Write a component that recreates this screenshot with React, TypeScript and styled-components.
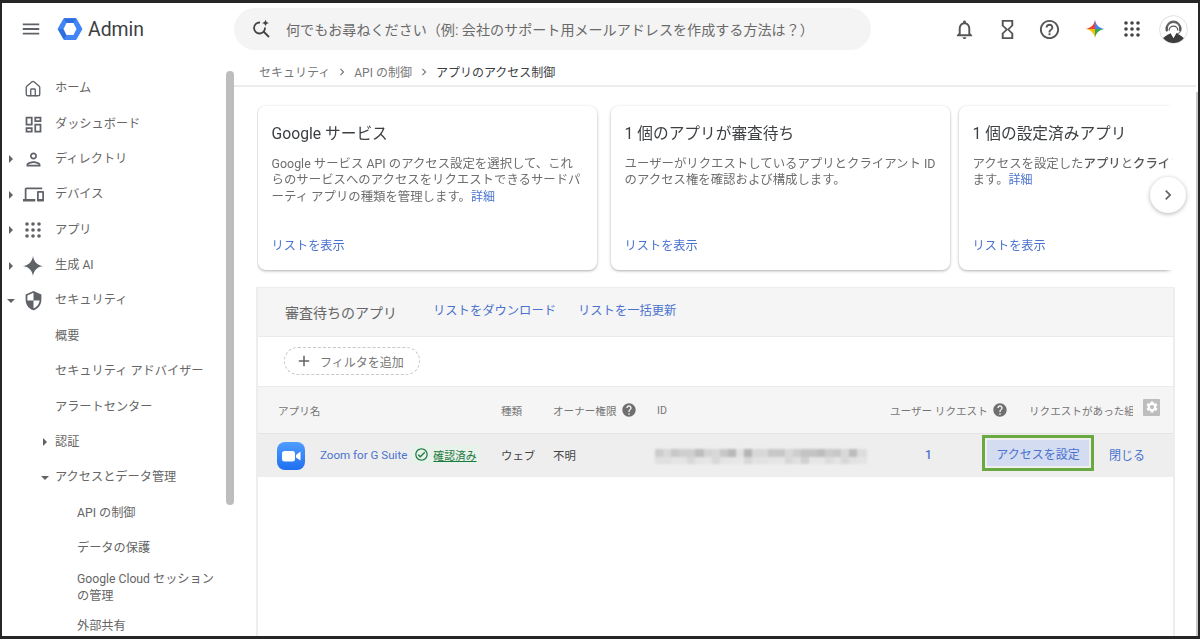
import React from "react";
import styled, { createGlobalStyle } from "styled-components";
import { House } from "lucide-react";
import {
  MdMenu,
  MdOutlineDashboard,
  MdOutlinePerson,
  MdOutlineDevices,
  MdSecurity,
  MdOutlineNotifications,
  MdOutlineHourglassEmpty,
  MdHelpOutline,
  MdHelp,
  MdChevronRight,
  MdAdd,
  MdOutlineCheckCircle,
  MdSettings,
} from "react-icons/md";

const GlobalStyle = createGlobalStyle`
  html, body {
    margin: 0;
    padding: 0;
    background: #fff;
  }
  * {
    box-sizing: border-box;
  }
`;

const BLUE = "#4a72cf";
const FONT = `"Roboto", "Noto Sans CJK JP", sans-serif`;

// hard-edged strip of grey blocks, used for the masked client id
const blockStrip = (shades: string[], size: number) =>
  `linear-gradient(90deg, ${shades
    .map((c, i) => `#${c} ${i * size}px ${(i + 1) * size}px`)
    .join(", ")})`;

const ID_TOP = "ccc d8d8d8 c8c8c8 cfcfcf cfcfcf bdbdbd d4d4d4 d8d8d8 c8c8c8 b8b8b8 e0e0e0 b4b4b4 d8d8d8 d8d8d8 c8c8c8 c8c8c8 d8d8d8 cdcdcd c4c4c4 c4c4c4 bdbdbd ccc c8c8c8 d8d8d8 bcbcbc dcdcdc".split(" ");
const ID_BOTTOM = "e0e0e0 e0e0e0 e4e4e4 e4e4e4 d8d8d8 e4e4e4 e6e6e6 d8d8d8 e4e4e4 e6e6e6 e8e8e8 d8d8d8 e2e2e2 e2e2e2 e4e4e4 e6e6e6 d8d8d8 e0e0e0 d0d0d0 e6e6e6 e6e6e6 dcdcdc e4e4e4 d8d8d8 e2e2e2 e4e4e4".split(" ");

const Frame = styled.div`
  width: 1200px;
  height: 639px;
  border: 2px solid #262626;
  border-top-width: 3px;
  border-bottom-width: 3px;
  background: #fff;
  display: flex;
  flex-direction: column;
  overflow: hidden;
  font-family: ${FONT};
  color: #5f6368;
`;

const Header = styled.header`
  height: 55px;
  flex: none;
  display: flex;
  align-items: center;
  padding-bottom: 3px;
`;

const MenuButton = styled.div`
  width: 232px;
  flex: none;
  display: flex;
  align-items: center;
  padding-left: 18px;
  color: #5f6368;
  font-size: 22px;
`;

const Logo = styled.svg`
  width: 26px;
  height: 26px;
  margin-left: 15px;
  flex: none;
`;

const Brand = styled.span`
  margin-left: 5px;
  font-size: 19.4px;
  color: #3c4043;
`;

const SearchPill = styled.div`
  width: 637px;
  height: 42px;
  flex: none;
  border-radius: 21px;
  background: #f4f4f4;
  display: flex;
  align-items: center;
  padding-left: 16px;
  font-size: 14.08px;
  color: #6a6a6a;
  white-space: nowrap;
`;

const SearchIcon = styled.svg`
  width: 22px;
  height: 22px;
  flex: none;
  margin-right: 14px;
`;

const HeaderIcons = styled.div`
  display: flex;
  align-items: center;
  margin-left: 72px;
  color: #555;
`;

const HeaderIcon = styled.span<{ $w: number }>`
  width: ${(p) => p.$w}px;
  flex: none;
  display: flex;
  justify-content: center;
  align-items: center;
  font-size: 23px;
`;

const Body = styled.div`
  flex: 1;
  display: flex;
  min-height: 0;
`;

const Sidebar = styled.nav`
  width: 224px;
  flex: none;
  padding-top: 13px;
  overflow: hidden;
`;

const NavRow = styled.div<{ $level: number }>`
  min-height: 35.38px;
  display: flex;
  align-items: center;
  padding: 4.4px 0 4.4px ${(p) => [3, 37, 75][p.$level]}px;
  font-size: 12.2px;
  line-height: 17px;
  color: #666;
`;

const ArrowSlot = styled.span<{ $level: number }>`
  width: 12px;
  flex: none;
  display: flex;
  justify-content: center;
  margin-right: ${(p) => (p.$level === 1 ? 4 : 0)}px;
`;

const Arrow = styled.span<{ $open?: boolean }>`
  width: 0;
  height: 0;
  ${(p) =>
    p.$open
      ? `border-left: 4px solid transparent;
         border-right: 4px solid transparent;
         border-top: 4px solid #5f6368;`
      : `border-top: 4px solid transparent;
         border-bottom: 4px solid transparent;
         border-left: 4px solid #5f6368;`}
`;

const NavIcon = styled.span`
  width: 32px;
  flex: none;
  margin-right: 6px;
  display: flex;
  justify-content: center;
  font-size: 21px;
  color: #5f6368;
`;

const ScrollTrack = styled.div`
  width: 8px;
  flex: none;
  padding-top: 13px;
`;

const ScrollThumb = styled.div`
  height: 434px;
  border-radius: 4px;
  background: #bdbdbd;
`;

const Main = styled.main`
  flex: 1;
  min-width: 0;
  display: flex;
  flex-direction: column;
  position: relative;
`;

const EdgeStripe = styled.div`
  width: 2px;
  flex: none;
  margin-top: 34px;
  background: #c9c9c9;
`;

const Breadcrumb = styled.div`
  height: 29px;
  flex: none;
  border-bottom: 2px solid #ececec;
  display: flex;
  align-items: center;
  padding-left: 25px;
  font-size: 12px;
  color: #777;
`;

const CrumbSep = styled(MdChevronRight)`
  margin: 0 5px;
  font-size: 14px;
`;

const CrumbCurrent = styled.span`
  color: #3c4043;
`;

const CardRow = styled.div`
  margin: 17px 0 0 23px;
  width: 916px;
  height: 182px;
  flex: none;
  display: flex;
  gap: 14px;
  overflow: hidden;
  padding: 2px 0 8px 1px;
  mask-image: linear-gradient(90deg, #000 calc(100% - 8px), transparent);
`;

const Card = styled.section`
  width: 339px;
  height: 164px;
  flex: none;
  border-radius: 8px;
  background: #fff;
  box-shadow: 0 1px 3px rgba(0, 0, 0, 0.32);
  padding: 18px 13px 16px 13.6px;
  display: flex;
  flex-direction: column;

  &:last-child {
    margin-left: -5px;
  }
`;

const CardTitle = styled.h3`
  margin: 0;
  font-size: 15.7px;
  line-height: 20px;
  font-weight: 400;
  color: #3c4043;
`;

const CardText = styled.p`
  margin: 11.5px 0 0;
  font-size: 12.4px;
  line-height: 16.6px;
  color: #6e6e6e;
  white-space: nowrap;
`;

const Strong = styled.b`
  font-weight: 500;
  color: #555;
`;

const Link = styled.a`
  color: ${BLUE};
  font-size: 12px;
`;

const CardLink = styled(Link)`
  margin-top: auto;
  font-size: 12.2px;
`;

const NextButton = styled.div`
  position: absolute;
  top: 119px;
  left: 916px;
  width: 36px;
  height: 36px;
  border-radius: 50%;
  background: #fff;
  box-shadow: 0 1px 4px rgba(0, 0, 0, 0.3);
  display: flex;
  align-items: center;
  justify-content: center;
  font-size: 20px;
  color: #5f6368;
`;

const Panel = styled.section`
  margin: 1px 0 0 22px;
  width: 919px;
  flex: 1;
  min-height: 0;
  border: 2px solid #ededed;
  border-top-width: 1px;
  border-bottom: none;
  display: flex;
  flex-direction: column;
`;

const PanelHead = styled.div`
  height: 49px;
  flex: none;
  background: #f5f5f5;
  border-bottom: 1px solid #ebebeb;
  display: flex;
  align-items: center;
  padding-left: 27px;
  font-size: 12.2px;
`;

const PanelTitle = styled.span`
  font-size: 14px;
  color: #666;
  margin-right: 36px;
  margin-bottom: 1px;
`;

const PanelLink = styled(Link)`
  font-size: 12.3px;
  margin-right: 22px;
  margin-bottom: 4px;
`;

const FilterRow = styled.div`
  height: 50px;
  flex: none;
  border-bottom: 1px solid #ebebeb;
  display: flex;
  align-items: center;
  padding: 0 0 1px 26px;
`;

const FilterPill = styled.div`
  width: 136px;
  height: 28px;
  border: 1px dashed #c8c8c8;
  border-radius: 14px;
  display: flex;
  align-items: center;
  padding-left: 10px;
  font-size: 12px;
  color: #777;
`;

const PlusIcon = styled(MdAdd)`
  font-size: 18px;
  color: #5f6368;
  margin-right: 7px;
`;

const TableHead = styled.div`
  height: 47px;
  flex: none;
  background: #f5f5f5;
  border-bottom: 1px solid #e4e4e4;
  display: grid;
  grid-template-columns: 223px 52px 104px 233px 139px 104px 1fr;
  align-items: center;
  padding-left: 20px;
  font-size: 10.6px;
  color: #757575;
`;

const HeadCell = styled.span`
  display: flex;
  align-items: center;
  gap: 4px;
  overflow: hidden;
  white-space: nowrap;
`;

const HelpIcon = styled(MdHelp)`
  font-size: 16px;
  color: #6f6f6f;
  flex: none;
`;

const GearBox = styled.span`
  width: 17px;
  height: 17px;
  margin: 0 0 6px 10px;
  background: #bdbdbd;
  color: #fff;
  border-radius: 1px;
  display: flex;
  align-items: center;
  justify-content: center;
  font-size: 14px;
`;

const TableRow = styled.div`
  height: 43px;
  flex: none;
  background: #eeeeee;
  display: grid;
  grid-template-columns: 223px 52px 104px 213px 112px 127px 1fr;
  align-items: center;
  padding: 0 0 2px 20px;
  font-size: 11.4px;
  color: #444;
`;

const NameCell = styled.div`
  display: flex;
  align-items: center;
`;

const ZoomIcon = styled.svg`
  width: 28px;
  height: 28px;
  flex: none;
  margin: 2px 15px 0 -1px;
`;

const AppLink = styled(Link)`
  font-size: 11.6px;
  margin-right: 3px;
`;

const Verified = styled.span`
  display: flex;
  align-items: center;
  height: 19px;
  padding: 0 2px 0 4px;
  background: #e8f1ea;
  border-radius: 3px;
  color: #1e7a43;
  font-size: 10.8px;
  text-decoration: underline;
  gap: 4px;
  white-space: nowrap;
`;

const VerifiedIcon = styled(MdOutlineCheckCircle)`
  font-size: 15px;
`;

const BlurredId = styled.div`
  width: 212px;
  height: 15px;
  margin-left: -2px;
  margin-top: 3px;
  filter: blur(1px);
  background:
    ${blockStrip(ID_TOP, 8.1)} top / 100% 8px no-repeat,
    ${blockStrip(ID_BOTTOM, 8.1)} bottom / 100% 7px no-repeat;
`;

const CountCell = styled(Link)`
  padding-left: 55px;
  font-weight: 500;
`;

const AccessButton = styled.div`
  width: 112px;
  height: 36px;
  margin-bottom: 3px;
  border: 3px solid #6aa842;
  background: #eeeeee;
  padding: 2px;
`;

const AccessInner = styled.span`
  height: 100%;
  display: flex;
  align-items: center;
  justify-content: center;
  background: #d3dcf0;
  color: ${BLUE};
  font-size: 12px;
`;

const Avatar = () => (
  <svg width="29" height="29" viewBox="0 0 30 30">
    <defs>
      <clipPath id="avatar-clip">
        <circle cx="15" cy="15" r="14" />
      </clipPath>
    </defs>
    <circle cx="15" cy="15" r="14.400" fill="#fff" stroke="#d6d6d6" strokeWidth="0.8" />
    <g clipPath="url(#avatar-clip)">
      <path d="M2 30c0-6 6-9 10-11l3 5 3-5c4 2 10 5 10 11z" fill="#3d3d3d" />
      <path d="M8 14a7 7 0 0 1 14 0" fill="none" stroke="#666" strokeWidth="2.400" />
      <path d="M10.500 16a4.500 4.500 0 0 1 9 0" fill="none" stroke="#555" strokeWidth="1.300" />
      <rect x="6.800" y="12.500" width="2.400" height="4.500" rx="1" fill="#555" />
      <rect x="20.800" y="12.500" width="2.400" height="4.500" rx="1" fill="#555" />
      <path d="M22 17c0 1.500-2 2.200-4 2.200" fill="none" stroke="#555" strokeWidth="1" />
    </g>
  </svg>
);

const Spark = () => (
  <svg width="22" height="22" viewBox="0 0 24 24">
    <path d="M12 1c.8 6.200 4.800 10.200 11 11-6.200.8-10.200 4.800-11 11-.8-6.200-4.800-10.200-11-11 6.200-.8 10.200-4.800 11-11z" fill="#5f6368" />
  </svg>
);

const DotGrid = ({ size, color }: { size: number; color: string }) => (
  <svg width={size} height={size} viewBox="0 0 16 16" fill={color}>
    {[2, 8, 14].map((y) =>
      [2, 8, 14].map((x) => <circle key={`${x}-${y}`} cx={x} cy={y} r="1.800" />)
    )}
  </svg>
);

const GeminiStar = () => (
  <svg width="20" height="20" viewBox="0 0 24 24">
    <defs>
      <clipPath id="gemini-star">
        <path d="M12 1c1 6 5 10 11 11-6 1-10 5-11 11-1-6-5-10-11-11 6-1 10-5 11-11z" />
      </clipPath>
    </defs>
    <g clipPath="url(#gemini-star)">
      <rect x="0" y="0" width="12" height="12" fill="#ea4335" />
      <rect x="12" y="0" width="12" height="12" fill="#4285f4" />
      <rect x="0" y="12" width="12" height="12" fill="#fbbc04" />
      <rect x="12" y="12" width="12" height="12" fill="#34a853" />
    </g>
  </svg>
);

type NavItem = {
  label: React.ReactNode;
  level: number;
  icon?: React.ReactNode;
  arrow?: "open" | "closed";
};

const navItems: NavItem[] = [
  { label: "ホーム", level: 0, icon: <House size={18} strokeWidth={1.8} /> },
  { label: "ダッシュボード", level: 0, icon: <MdOutlineDashboard /> },
  { label: "ディレクトリ", level: 0, icon: <MdOutlinePerson />, arrow: "closed" },
  { label: "デバイス", level: 0, icon: <MdOutlineDevices />, arrow: "closed" },
  { label: "アプリ", level: 0, icon: <DotGrid size={16} color="#5f6368" />, arrow: "closed" },
  { label: "生成 AI", level: 0, icon: <Spark />, arrow: "closed" },
  { label: "セキュリティ", level: 0, icon: <MdSecurity />, arrow: "open" },
  { label: "概要", level: 1 },
  { label: "セキュリティ アドバイザー", level: 1 },
  { label: "アラートセンター", level: 1 },
  { label: "認証", level: 1, arrow: "closed" },
  { label: "アクセスとデータ管理", level: 1, arrow: "open" },
  { label: "API の制御", level: 2 },
  { label: "データの保護", level: 2 },
  {
    label: (
      <>
        Google Cloud セッション
        <br />
        の管理
      </>
    ),
    level: 2,
  },
  { label: "外部共有", level: 2 },
];

const App = () => {
  return (
    <Frame>
      <GlobalStyle />
      <Header>
        <MenuButton>
          <MdMenu />
          <Logo viewBox="0 0 26 26">
            <polygon points="7,2.500 19,2.500 25,13 19,23.500 7,23.500 1,13" fill="#4285f4" stroke="#4285f4" strokeLinejoin="round" />
            <polygon points="7,2.500 19,2.500 16.500,7 9.500,7" fill="#2f6fdc" />
            <polygon points="1,13 7,23.500 9.500,19 6.500,13" fill="#2f6fdc" />
            <polygon points="9.500,7 16.500,7 19.500,13 16.500,19 9.500,19 6.500,13" fill="#fff" />
          </Logo>
          <Brand>Admin</Brand>
        </MenuButton>
        <SearchPill>
          <SearchIcon viewBox="0 0 22 22" fill="none" stroke="#444" strokeWidth="1.800">
            <path d="M10 4.500a5.500 5.500 0 1 0 5 5" />
            <path d="M13.500 13.500L19 19" />
            <path d="M15.500 1.500c.3 2 1.500 3.200 3.500 3.500-2 .3-3.200 1.500-3.500 3.500-.3-2-1.500-3.200-3.500-3.500 2-.3 3.200-1.500 3.500-3.500z" fill="#444" stroke="none" />
          </SearchIcon>
          何でもお尋ねください（例: 会社のサポート用メールアドレスを作成する方法は？）
        </SearchPill>
        <HeaderIcons>
          <HeaderIcon $w={43}><MdOutlineNotifications /></HeaderIcon>
          <HeaderIcon $w={42}><MdOutlineHourglassEmpty /></HeaderIcon>
          <HeaderIcon $w={43}><MdHelpOutline /></HeaderIcon>
          <HeaderIcon $w={47}><GeminiStar /></HeaderIcon>
          <HeaderIcon $w={27}><DotGrid size={16} color="#444" /></HeaderIcon>
          <HeaderIcon $w={57}><Avatar /></HeaderIcon>
        </HeaderIcons>
      </Header>
      <Body>
        <Sidebar>
          {navItems.map((item, i) => (
            <NavRow key={i} $level={item.level}>
              {item.level < 2 && (
                <ArrowSlot $level={item.level}>
                  {item.arrow && <Arrow $open={item.arrow === "open"} />}
                </ArrowSlot>
              )}
              {item.icon && <NavIcon>{item.icon}</NavIcon>}
              <span>{item.label}</span>
            </NavRow>
          ))}
        </Sidebar>
        <ScrollTrack>
          <ScrollThumb />
        </ScrollTrack>
        <Main>
          <Breadcrumb>
            セキュリティ
            <CrumbSep />
            API の制御
            <CrumbSep />
            <CrumbCurrent>アプリのアクセス制御</CrumbCurrent>
          </Breadcrumb>
          <CardRow>
            <Card>
              <CardTitle>Google サービス</CardTitle>
              <CardText>
                Google サービス API のアクセス設定を選択して、これ
                <br />
                らのサービスへのアクセスをリクエストできるサードパ
                <br />
                ーティ アプリの種類を管理します。<Link>詳細</Link>
              </CardText>
              <CardLink>リストを表示</CardLink>
            </Card>
            <Card>
              <CardTitle>1 個のアプリが審査待ち</CardTitle>
              <CardText>
                ユーザーがリクエストしているアプリとクライアント ID
                <br />
                のアクセス権を確認および構成します。
              </CardText>
              <CardLink>リストを表示</CardLink>
            </Card>
            <Card>
              <CardTitle>1 個の設定済みアプリ</CardTitle>
              <CardText>
                アクセスを設定した<Strong>アプリ</Strong>と<Strong>クライアント</Strong>
                <br />
                ます。<Link>詳細</Link>
              </CardText>
              <CardLink>リストを表示</CardLink>
            </Card>
          </CardRow>
          <NextButton>
            <MdChevronRight />
          </NextButton>
          <Panel>
            <PanelHead>
              <PanelTitle>審査待ちのアプリ</PanelTitle>
              <PanelLink>リストをダウンロード</PanelLink>
              <PanelLink>リストを一括更新</PanelLink>
            </PanelHead>
            <FilterRow>
              <FilterPill>
                <PlusIcon />
                フィルタを追加
              </FilterPill>
            </FilterRow>
            <TableHead>
              <HeadCell>アプリ名</HeadCell>
              <HeadCell>種類</HeadCell>
              <HeadCell>
                オーナー権限
                <HelpIcon />
              </HeadCell>
              <HeadCell>ID</HeadCell>
              <HeadCell>
                ユーザー リクエスト
                <HelpIcon />
              </HeadCell>
              <HeadCell>リクエストがあった組織部門</HeadCell>
              <GearBox>
                <MdSettings />
              </GearBox>
            </TableHead>
            <TableRow>
              <NameCell>
                <ZoomIcon viewBox="0 0 28 28">
                  <defs>
                    <linearGradient id="zoom-bg" x1="0" y1="0" x2="0" y2="1">
                      <stop offset="0" stopColor="#4f9dff" />
                      <stop offset="1" stopColor="#1f6ff0" />
                    </linearGradient>
                  </defs>
                  <rect width="28" height="28" rx="8" fill="url(#zoom-bg)" />
                  <rect x="5" y="9" width="13" height="10.500" rx="2.500" fill="#fff" />
                  <path d="M19 13l4.500-3.500v9L19 15.500z" fill="#fff" />
                </ZoomIcon>
                <AppLink>Zoom for G Suite</AppLink>
                <Verified>
                  <VerifiedIcon />
                  確認済み
                </Verified>
              </NameCell>
              <span>ウェブ</span>
              <span>不明</span>
              <BlurredId />
              <CountCell>1</CountCell>
              <AccessButton>
                <AccessInner>アクセスを設定</AccessInner>
              </AccessButton>
              <Link>閉じる</Link>
            </TableRow>
          </Panel>
        </Main>
        <EdgeStripe />
      </Body>
    </Frame>
  );
};

export default App;
